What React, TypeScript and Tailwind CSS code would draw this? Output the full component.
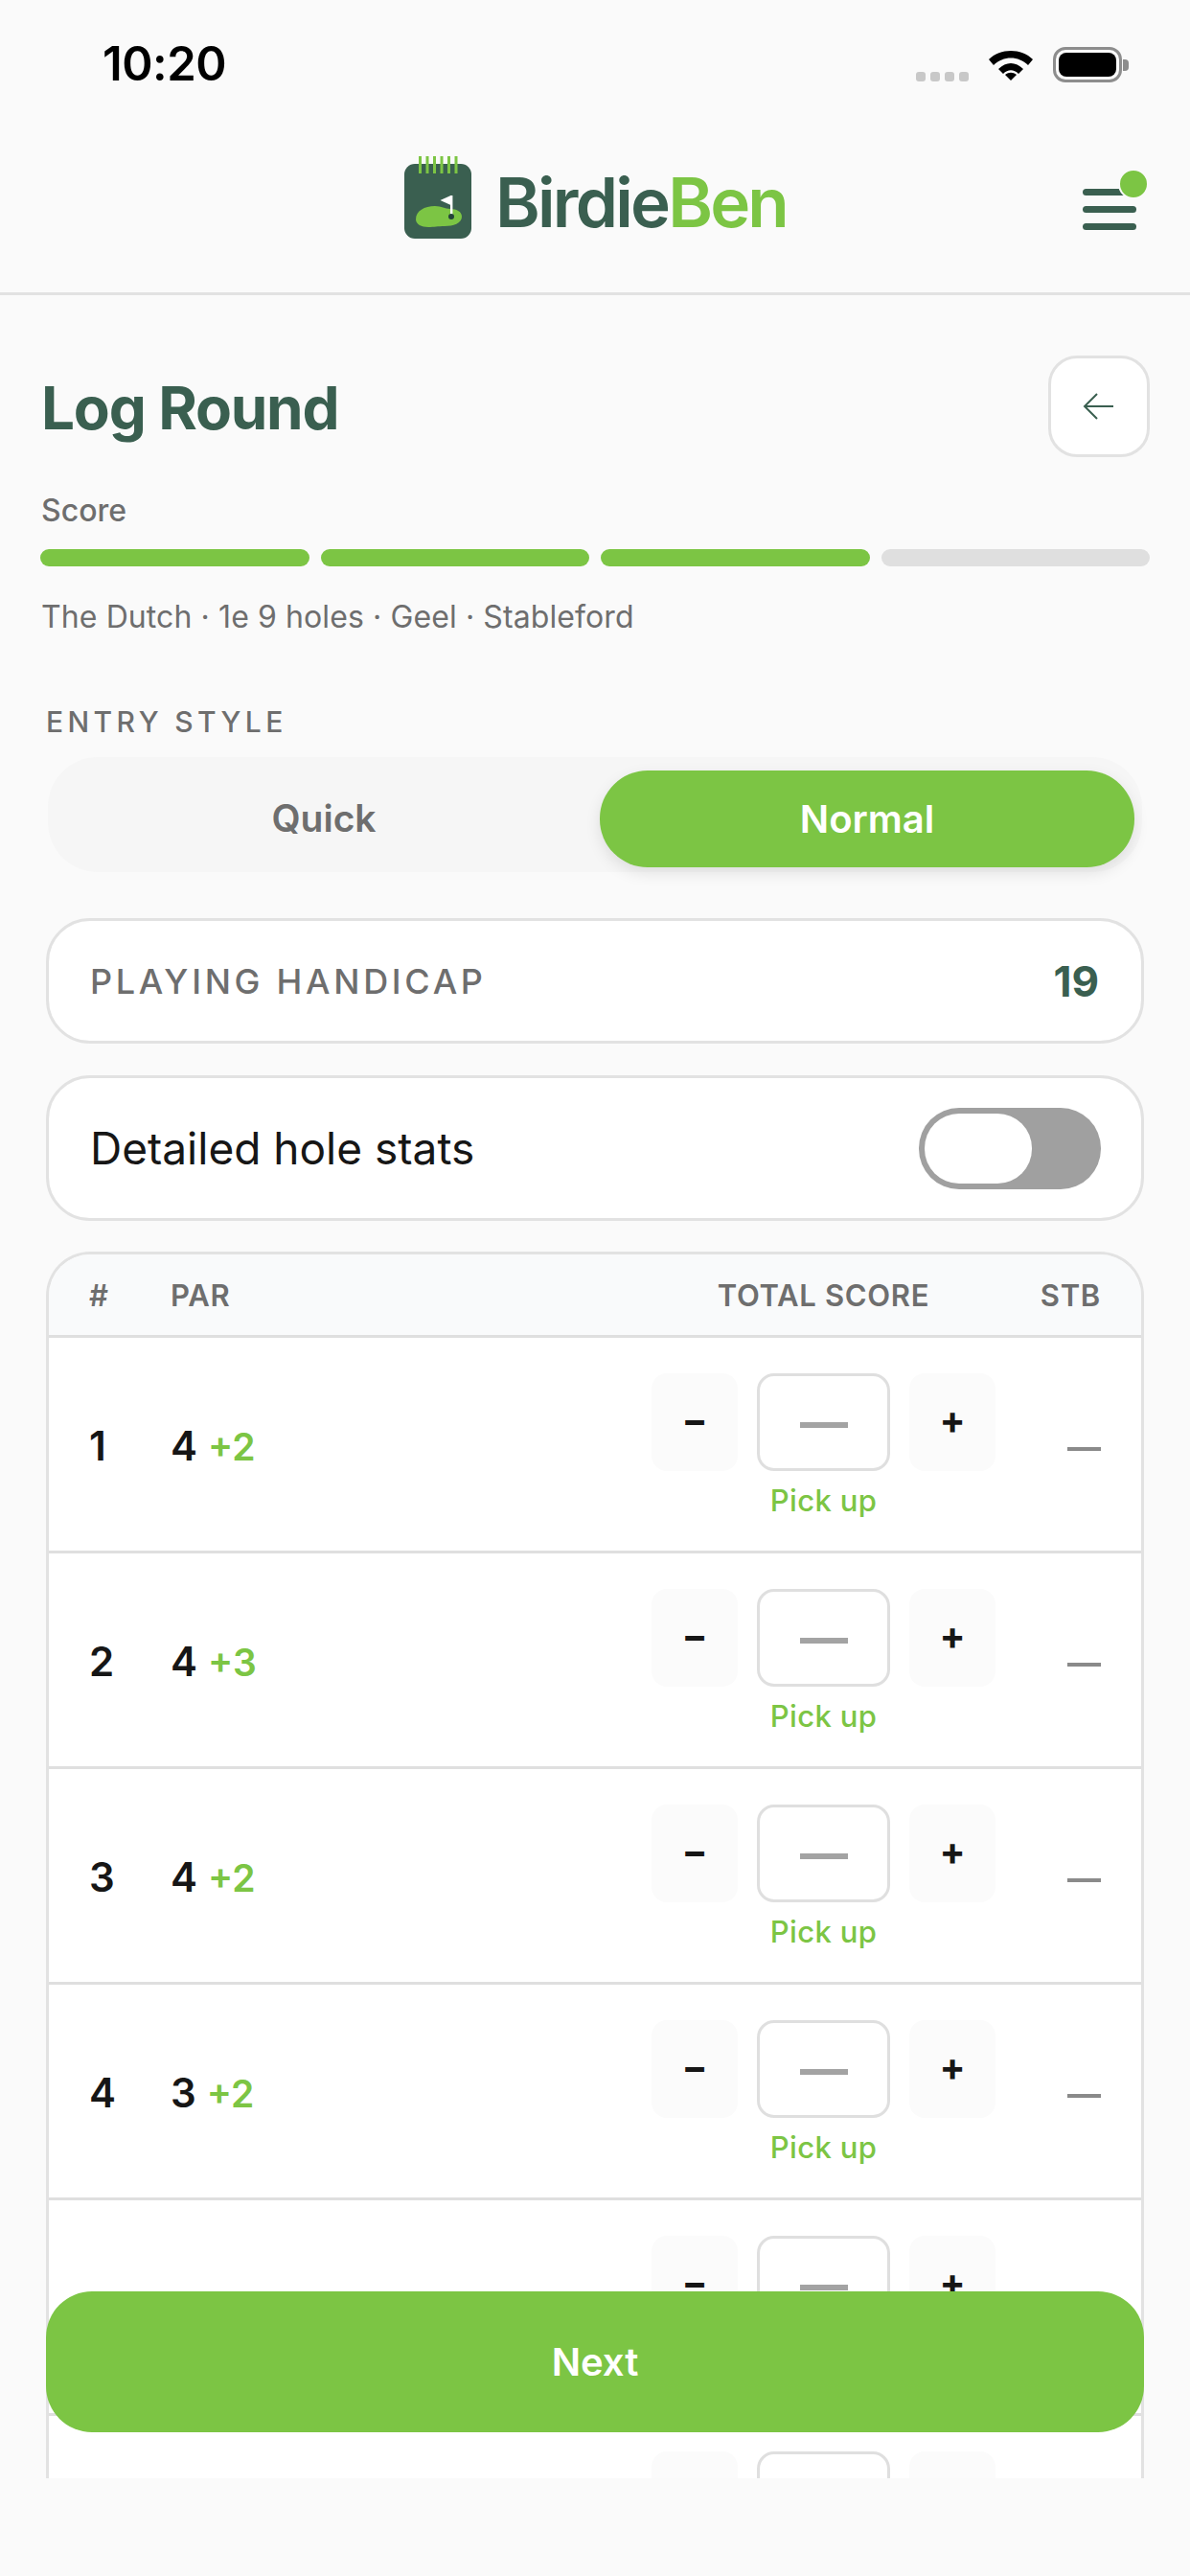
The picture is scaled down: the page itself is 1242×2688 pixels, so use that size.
function Logo() {
  return (
    <svg width="72" height="88" viewBox="0 0 72 88" className="-mt-[10px] block">
      <rect x="1" y="8" width="70" height="78" rx="11" fill="#3a5f50" />
      {[16, 23.5, 31, 38.5, 46, 53.5].map((x) => (
        <rect key={x} x={x} y="0" width="3" height="18" fill="#7cc544" />
      ))}
      <path d="M13 66c0-9 9-14 20-14 7 0 10 3 16 3 7 0 12 3 12 8 0 7-9 10-18 10-7 0-11 1-17 1-7 0-13-3-13-8z" fill="#7cc544" />
      <path d="M49.5 41v10l-11-5z" fill="#fff" />
      <rect x="49" y="41" width="2.4" height="21" fill="#fff" />
      <circle cx="50" cy="63" r="3" fill="#24433a" />
    </svg>
  );
}

function Row({ n, par, si }: { n: number; par: number; si: string }) {
  return (
    <div className="grid h-[225px] shrink-0 grid-cols-[85px_1fr_359px_110px] items-center border-b-[3px] border-[#dfdfdf] bg-white pl-[42px] pr-[42px]">
      <div className="mt-[4px] text-[42px] font-semibold leading-none text-[#161616]">{n}</div>
      <div className="mt-[4px] flex items-baseline gap-[12px] text-[42px] font-semibold leading-none text-[#161616]">
        <span>{par}</span>
        <span className="-ml-[1px] text-[39px] text-[#7cc544]">{si}</span>
      </div>
      <div className="flex flex-col items-center">
        <div className="mt-[2px] flex w-full items-start justify-between">
          <div className="flex h-[102px] w-[90px] items-center justify-center rounded-[16px] bg-[#fbfbfb] pb-[4px] text-[40px] font-bold leading-none text-[#161616]">−</div>
          <div className="flex h-[102px] w-[139px] items-center justify-center rounded-[18px] border-[3px] border-[#dfdfdf] bg-white">
            <div className="mt-[6px] h-[6px] w-[50px] bg-[#a3a3a3]" />
          </div>
          <div className="flex h-[102px] w-[90px] items-center justify-center rounded-[16px] bg-[#fbfbfb] pb-[4px] text-[40px] font-bold leading-none text-[#161616]">+</div>
        </div>
        <div className="mt-[13px] text-[31px] font-medium leading-[36px] tracking-[0.35px] text-[#7cc544]">Pick up</div>
      </div>
      <div className="flex justify-end pt-[9px]">
        <div className="h-[4px] w-[35px] bg-[#8a8a8a]" />
      </div>
    </div>
  );
}

export default function App() {
  const rows = [
    { n: 1, par: 4, si: "+2" },
    { n: 2, par: 4, si: "+3" },
    { n: 3, par: 4, si: "+2" },
    { n: 4, par: 3, si: "+2" },
    { n: 5, par: 5, si: "+2" },
    { n: 6, par: 4, si: "+2" },
  ];
  return (
    <div className="relative flex h-[2688px] w-[1242px] flex-col overflow-hidden bg-[#fafafa] font-['Inter',sans-serif]">
      {/* status bar */}
      <div className="flex h-[132px] shrink-0 items-start justify-between pl-[107px] pr-[64px] pt-[36px]">
        <div className="text-[49px] font-semibold leading-[62px] tracking-[-0.5px] text-black">10:20</div>
        <div className="flex items-start pt-[13px]">
          <div className="mr-[20px] mt-[26px] flex gap-[5px]">
            {[0, 1, 2, 3].map((i) => (
              <div key={i} className="h-[10px] w-[10px] rounded-[3px] bg-[#c8c8c8]" />
            ))}
          </div>
          <svg width="48" height="36" viewBox="0 0 48 36" className="mr-[20px]">
            <path d="M1 13C13 1 35 1 47 13l-5 6C32 9 16 9 6 19z" fill="#000" />
            <path d="M11 23c8-8 18-8 26 0l-5 5c-5-5-11-5-16 0z" fill="#000" />
            <path d="M18 29c4-3 8-3 12 0l-6 6z" fill="#000" />
          </svg>
          <div className="flex items-center">
            <div className="flex h-[37px] w-[72px] items-center justify-center rounded-[13px] border-[3px] border-[#8d8d8d]">
              <div className="h-[25px] w-[60px] rounded-[8px] bg-black" />
            </div>
            <div className="ml-[1px] h-[12px] w-[6px] rounded-r-[4px] bg-[#8d8d8d]" />
          </div>
        </div>
      </div>

      {/* header */}
      <div className="grid h-[176px] shrink-0 grid-cols-[1fr_auto_1fr] items-center border-b-[3px] border-[#e2e2e2] pb-[14px]">
        <div />
        <div className="flex items-center gap-[24px]">
          <Logo />
          <div className="text-[71px] font-semibold leading-none tracking-[-2.8px]">
            <span className="text-[#3a5f50]">Birdie</span>
            <span className="text-[#7cc544]">Ben</span>
          </div>
        </div>
        <div className="flex justify-end pr-[56px]">
          <div className="relative flex w-[56px] flex-col gap-[11px] pt-[13px]">
            <div className="h-[7px] rounded-full bg-[#3a5f50]" />
            <div className="h-[7px] rounded-full bg-[#3a5f50]" />
            <div className="h-[7px] rounded-full bg-[#3a5f50]" />
            <div className="absolute -right-[13px] -top-[8px] h-[32px] w-[32px] rounded-full border-[2px] border-[#fafafa] bg-[#7cc544]" />
          </div>
        </div>
      </div>

      {/* title */}
      <div className="flex shrink-0 items-center justify-between pl-[43px] pr-[42px] pt-[63px]">
        <h1 className="mt-[3px] text-[62px] font-bold leading-none tracking-[-1.2px] text-[#3a5f50]">Log Round</h1>
        <div className="flex h-[106px] w-[106px] items-center justify-center rounded-[30px] border-[3px] border-[#e2e2e2] bg-white">
          <svg width="34" height="34" viewBox="0 0 34 34" fill="none" stroke="#3a5f50" strokeWidth="2">
            <path d="M32 17H2M15 4 2 17l13 13" />
          </svg>
        </div>
      </div>

      <div className="mt-[38px] shrink-0 pl-[43px] text-[32px] font-medium leading-[36px] text-[#6e6e6e]">Score</div>
      <div className="mt-[22px] flex shrink-0 gap-[12px] pl-[42px] pr-[42px]">
        <div className="h-[18px] flex-1 rounded-full bg-[#7cc544]" />
        <div className="h-[18px] flex-1 rounded-full bg-[#7cc544]" />
        <div className="h-[18px] flex-1 rounded-full bg-[#7cc544]" />
        <div className="h-[18px] flex-1 rounded-full bg-[#dfdfdf]" />
      </div>
      <div className="mt-[34px] shrink-0 pl-[43px] text-[32px] leading-[38px] tracking-[0.1px] text-[#6e6e6e]">
        The Dutch · 1e 9 holes · Geel · Stableford
      </div>

      <div className="mt-[72px] shrink-0 pl-[48px] text-[30px] font-medium leading-[36px] tracking-[4.4px] text-[#6e6e6e]">ENTRY STYLE</div>

      {/* segmented */}
      <div className="mx-[50px] mt-[19px] flex h-[120px] shrink-0 items-center rounded-[52px] bg-[#f6f6f6] pr-[8px] pt-[9px]">
        <div className="flex-1 text-center text-[39px] font-semibold text-[#6e6e6e]">Quick</div>
        <div className="flex h-[101px] w-[558px] items-center justify-center rounded-[50px] bg-[#7cc544] text-[40px] font-semibold text-white shadow-[0_6px_16px_rgba(0,0,0,0.1)]">Normal</div>
      </div>

      {/* handicap */}
      <div className="mx-[48px] mt-[48px] flex h-[131px] shrink-0 items-center justify-between rounded-[46px] border-[3px] border-[#e2e2e2] bg-white pl-[43px] pr-[44px]">
        <div className="text-[36px] font-medium tracking-[3.7px] text-[#6e6e6e]">PLAYING HANDICAP</div>
        <div className="text-[44px] font-bold text-[#3a5f50]">19</div>
      </div>

      {/* toggle */}
      <div className="mx-[48px] mt-[33px] flex h-[152px] shrink-0 items-center justify-between rounded-[46px] border-[3px] border-[#e2e2e2] bg-white pl-[43px] pr-[42px]">
        <div className="text-[46px] leading-none text-[#161616]">Detailed hole stats</div>
        <div className="flex h-[85px] w-[190px] items-center rounded-[42px] bg-[#a0a0a0] pl-[6px]">
          <div className="h-[73px] w-[112px] rounded-[36px] bg-white" />
        </div>
      </div>

      {/* table */}
      <div className="mx-[48px] mt-[32px] flex h-[1280px] shrink-0 flex-col overflow-hidden rounded-t-[46px] border-x-[3px] border-t-[3px] border-[#e2e2e2]">
        <div className="grid h-[87px] shrink-0 grid-cols-[85px_1fr_359px_110px] items-center border-b-[3px] border-[#dfdfdf] bg-[#f9fafb] pl-[42px] pr-[42px] text-[31px] font-semibold leading-none tracking-[0.7px] text-[#6e6e6e]">
          <div>#</div>
          <div>PAR</div>
          <div className="text-center">TOTAL SCORE</div>
          <div className="text-right">STB</div>
        </div>
        {rows.map((r) => (
          <Row key={r.n} {...r} />
        ))}
      </div>

      {/* floating button */}
      <div className="absolute left-[48px] top-[2391px] flex h-[147px] w-[1146px] items-center justify-center rounded-[48px] bg-[#7cc544] text-[40px] font-semibold text-white">
        Next
      </div>
    </div>
  );
}
